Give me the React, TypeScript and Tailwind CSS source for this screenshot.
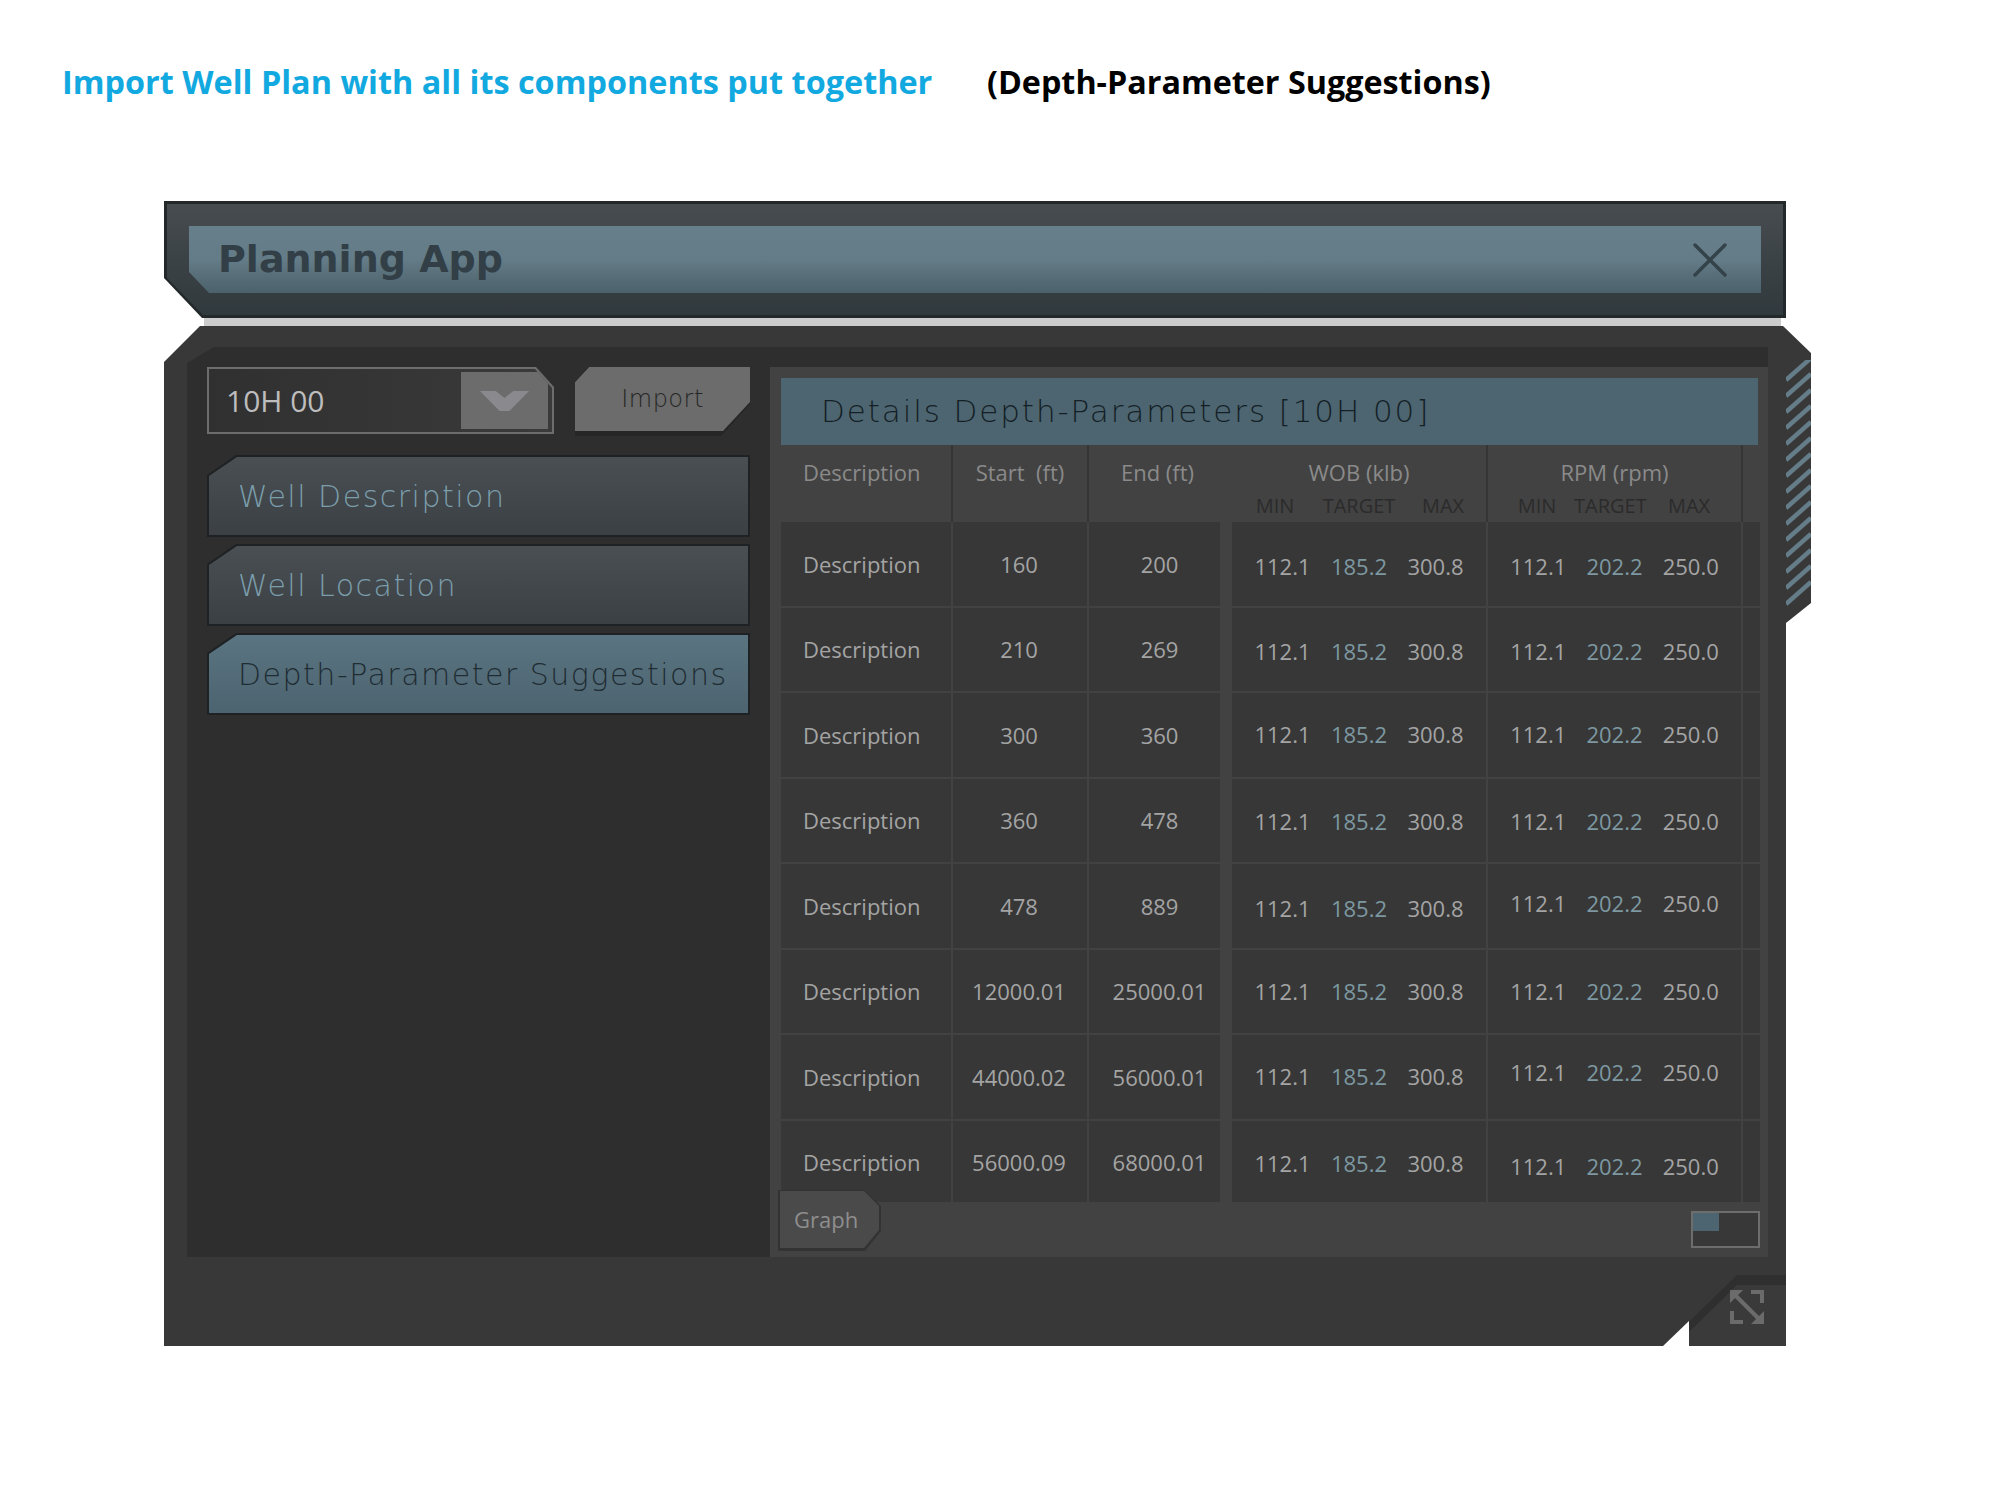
const rows = [
  { d: "Description", s: "160", e: "200", wob: "pt-[5px]", rpm: "pt-[5px]" },
  { d: "Description", s: "210", e: "269", wob: "pt-[5px]", rpm: "pt-[5px]" },
  { d: "Description", s: "300", e: "360", wob: "pb-[1px]", rpm: "pb-[1px]" },
  { d: "Description", s: "360", e: "478", wob: "pt-[3px]", rpm: "pt-[3px]" },
  { d: "Description", s: "478", e: "889", wob: "pt-[5px]", rpm: "pb-[4px]" },
  { d: "Description", s: "12000.01", e: "25000.01", wob: "pt-[1px]", rpm: "pt-[1px]" },
  { d: "Description", s: "44000.02", e: "56000.01", wob: "pb-[1px]", rpm: "pb-[9px]" },
  { d: "Description", s: "56000.09", e: "68000.01", wob: "pt-[3px]", rpm: "pt-[8px]" },
];

const tableCols = "grid grid-cols-[170px_136px_133px_12px_254px_255px_19px]";

function Values({ a, b, c, className }: { a: string; b: string; c: string; className?: string }) {
  return (
    <div className={`grid grid-cols-[1fr_76px_1fr] items-center text-center px-[12px] ${className ?? ""}`}>
      <span>{a}</span>
      <span className="text-[#7d98a1]">{b}</span>
      <span>{c}</span>
    </div>
  );
}

function NavItem({ label, active }: { label: string; active?: boolean }) {
  return (
    <div className="h-[82px] bg-[#1e2224] p-[2px] [clip-path:polygon(29px_0,100%_0,100%_100%,0_100%,0_20px)]">
      <div
        className={`h-full flex items-center pl-[29px] font-['DejaVu_Sans'] font-extralight text-[30px] tracking-[1.5px] [clip-path:polygon(28px_0,100%_0,100%_100%,0_100%,0_19px)] ${
          active
            ? "bg-gradient-to-b from-[#5a7481] to-[#4c6470] text-[#1f2c33]"
            : "bg-gradient-to-b from-[#494f53] to-[#3a4044] text-[#7c9eac]"
        }`}
      >
        {label}
      </div>
    </div>
  );
}

export default function App() {
  return (
    <div className="w-[2000px] h-[1493px] bg-white font-['Open_Sans',sans-serif] overflow-hidden">
      <div className="flex pl-[62px] pt-[56px] h-[201px] font-bold leading-[50px] whitespace-nowrap">
        <h1 className="text-[#12a9e0] w-[925px] text-[32.4px]">Import Well Plan with all its components put together</h1>
        <span className="text-black text-[32.3px]">(Depth-Parameter Suggestions)</span>
      </div>

      <div className="ml-[164px] w-[1622px] h-[117px] bg-[#23282a] p-[3px] [clip-path:polygon(0_0,100%_0,100%_100%,38px_100%,0_77px)]">
        <div className="h-full px-[22px] py-[22px] bg-gradient-to-b from-[#474c4f] to-[#30393d] [clip-path:polygon(0_0,100%_0,100%_100%,36px_100%,0_74px)]">
          <div className="h-full flex items-center justify-between pl-[29px] pr-[34px] bg-gradient-to-b from-[#677f8a] via-[#647c87] to-[#4b616c] [clip-path:polygon(0_0,100%_0,100%_100%,20px_100%,0_46px)]">
            <span className="font-['DejaVu_Sans'] font-bold text-[38px] text-[#323f47]">Planning App</span>
            <svg width="34" height="34" viewBox="0 0 34 34" fill="none" stroke="#34424a" strokeWidth="3.5" strokeLinecap="round">
              <path d="M2 2 L32 32 M32 2 L2 32" />
            </svg>
          </div>
        </div>
      </div>

      <div className="ml-[204px] w-[1577px] h-[8px] bg-[#cccccc]" />

      <div className="relative ml-[164px] w-[1647px] h-[1020px] bg-[#383838] pt-[21px] pl-[23px] [clip-path:polygon(0_36px,36px_0,1619px_0,1647px_27px,1647px_277px,1622px_297px,1622px_100%,1525px_100%,1525px_995px,1499px_100%,0_100%)]">
        <div className="w-[1581px] h-[910px] bg-[#2e2e2e] flex [clip-path:polygon(27px_0,100%_0,100%_100%,0_100%,0_16px)]">
          <div className="w-[583px] pl-[20px] pr-[20px] pt-[20px]">
            <div className="flex justify-between">
              <div className="w-[347px] h-[67px] bg-[#6d6d6d] p-[2px] [clip-path:polygon(0_0,calc(100%-18px)_0,100%_20px,100%_100%,0_100%)]">
                <div className="h-full bg-gradient-to-r from-[#303030] to-[#3a3a3a] flex items-stretch [clip-path:polygon(0_0,calc(100%-17px)_0,100%_19px,100%_100%,0_100%)]">
                  <span className="flex-1 flex items-center pl-[17px] text-[30px] text-[#bdbdbd]">10H 00</span>
                  <div className="w-[87px] my-[3px] mr-[4px] bg-[#6c6c6c] flex items-center justify-center">
                    <svg width="49" height="20" viewBox="0 0 50 26" fill="#8a8a8e" preserveAspectRatio="none">
                      <path d="M0 0 H16 L25 9 L34 0 H50 L30 26 H20 Z" />
                    </svg>
                  </div>
                </div>
              </div>
              <div className="w-[175px] h-[69px] bg-[#262626] [clip-path:polygon(14px_0,100%_0,100%_37px,146px_100%,0_100%,0_15px)]">
                <div className="h-[64px] bg-[#6b6c6b] flex items-center justify-center font-['DejaVu_Sans'] font-extralight text-[24px] tracking-[0.5px] text-[#262626] [clip-path:polygon(14px_0,100%_0,100%_35px,148px_100%,0_100%,0_15px)]">
                  Import
                </div>
              </div>
            </div>
            <div className="flex flex-col gap-[7px] mt-[19px]">
              <NavItem label="Well Description" />
              <NavItem label="Well Location" />
              <NavItem label="Depth-Parameter Suggestions" active />
            </div>
          </div>

          <div className="w-[998px] h-[890px] mt-[20px] bg-[#424242] pt-[11px] pl-[11px] pr-[8px] flex flex-col">
            <div className="h-[67px] mr-[2px] shrink-0 bg-[#4d6570] flex items-center pl-[40px] font-['DejaVu_Sans'] font-extralight text-[31px] text-[#141f26] tracking-[1.9px]">
              Details Depth-Parameters [10H 00]
            </div>

            <div className={`${tableCols} h-[77px] shrink-0 text-center text-[22px] text-[#8a8a8a]`}>
              <div className="text-left pl-[22px] pt-[11px]">Description</div>
              <div className="border-l-2 border-[#353535] pt-[11px]">Start&nbsp;&nbsp;(ft)</div>
              <div className="col-span-2 border-l-2 border-[#353535] pt-[11px] pr-[6px]">End (ft)</div>
              <div className="pt-[11px]">
                <div>WOB (klb)</div>
                <div className="grid grid-cols-[84px_84px_84px] px-[1px] text-[20px] leading-[24px] text-[#2b2b2b] mt-[5px]">
                  <span>MIN</span>
                  <span>TARGET</span>
                  <span>MAX</span>
                </div>
              </div>
              <div className="border-l-2 border-[#353535] pt-[11px]">
                <div>RPM (rpm)</div>
                <div className="grid grid-cols-[74px_72px_86px] pl-[12px] text-[20px] leading-[24px] text-[#2b2b2b] mt-[5px]">
                  <span>MIN</span>
                  <span>TARGET</span>
                  <span>MAX</span>
                </div>
              </div>
              <div className="border-l-2 border-[#353535]" />
            </div>

            <div className="flex-1 overflow-hidden">
              {rows.map((r, i) => (
                <div key={i} className={`${tableCols} h-[85.5px] text-[22px] text-[#a4a4a4] text-center`}>
                  <div className="bg-[#373737] border-b-2 border-[#424242] flex items-center pl-[22px] pt-[1px]">{r.d}</div>
                  <div className="bg-[#373737] border-b-2 border-l-2 border-[#424242] flex items-center justify-center pt-[1px] pr-[2px]">{r.s}</div>
                  <div className="bg-[#373737] border-b-2 border-l-2 border-[#424242] flex items-center justify-center pt-[1px] pl-[10px]">{r.e}</div>
                  <div />
                  <Values a="112.1" b="185.2" c="300.8" className={`bg-[#373737] border-b-2 border-[#424242] ${r.wob}`} />
                  <Values a="112.1" b="202.2" c="250.0" className={`bg-[#373737] border-b-2 border-l-2 border-[#424242] ${r.rpm}`} />
                  <div className="bg-[#373737] border-b-2 border-l-2 border-[#424242]" />
                </div>
              ))}
            </div>

            <div className="h-[55px] shrink-0 flex justify-between items-start">
              <div className="relative -mt-[12px] -ml-[3px] w-[103px] h-[61px] bg-[#333333] [clip-path:polygon(0_0,calc(100%-16px)_0,100%_16px,100%_calc(100%-20px),calc(100%-16px)_100%,0_100%)]">
                <div className="h-[57px] mt-[1px] ml-[2px] mr-[2px] flex items-center pl-[14px] bg-[#4a4a4a] text-[22px] text-[#8e8e8e] [clip-path:polygon(0_0,calc(100%-15px)_0,100%_15px,100%_calc(100%-18px),calc(100%-15px)_100%,0_100%)]">
                  Graph
                </div>
              </div>
              <div className="w-[69px] h-[37px] mt-[9px] bg-[#383838] border-2 border-[#6d6d6d]">
                <div className="w-[26px] h-[18px] bg-[#4d6570]" />
              </div>
            </div>
          </div>
        </div>

        <svg className="absolute left-[1622px] top-[34px]" width="25" height="246" viewBox="0 0 25 246">
          {Array.from({ length: 15 }).map((_, i) => (
            <path key={i} d={`M0 ${20 + i * 16} L25 ${-2 + i * 16}`} stroke="#647d89" strokeWidth="4.5" />
          ))}
        </svg>

        <div className="absolute left-[1525px] top-[949px] w-[97px] h-[71px] bg-[#2f2f2f] [clip-path:polygon(48px_0,100%_0,100%_100%,0_100%,0_47px)]">
          <div className="h-[61px] mt-[10px] bg-[#3a3a3a] [clip-path:polygon(48px_0,100%_0,100%_100%,0_100%,0_47px)]" />
          <svg className="absolute left-[40px] top-[14px]" width="36" height="36" viewBox="0 0 36 36" fill="none" stroke="#6b6b6b" strokeWidth="4">
            <path d="M22 3 H33 V14 M3 22 V33 H14" />
            <path d="M6 6 L30 30" />
            <path d="M1 1 H14 L1 14 Z M35 35 H22 L35 22 Z" fill="#6b6b6b" stroke="none" />
          </svg>
        </div>
      </div>
    </div>
  );
}
